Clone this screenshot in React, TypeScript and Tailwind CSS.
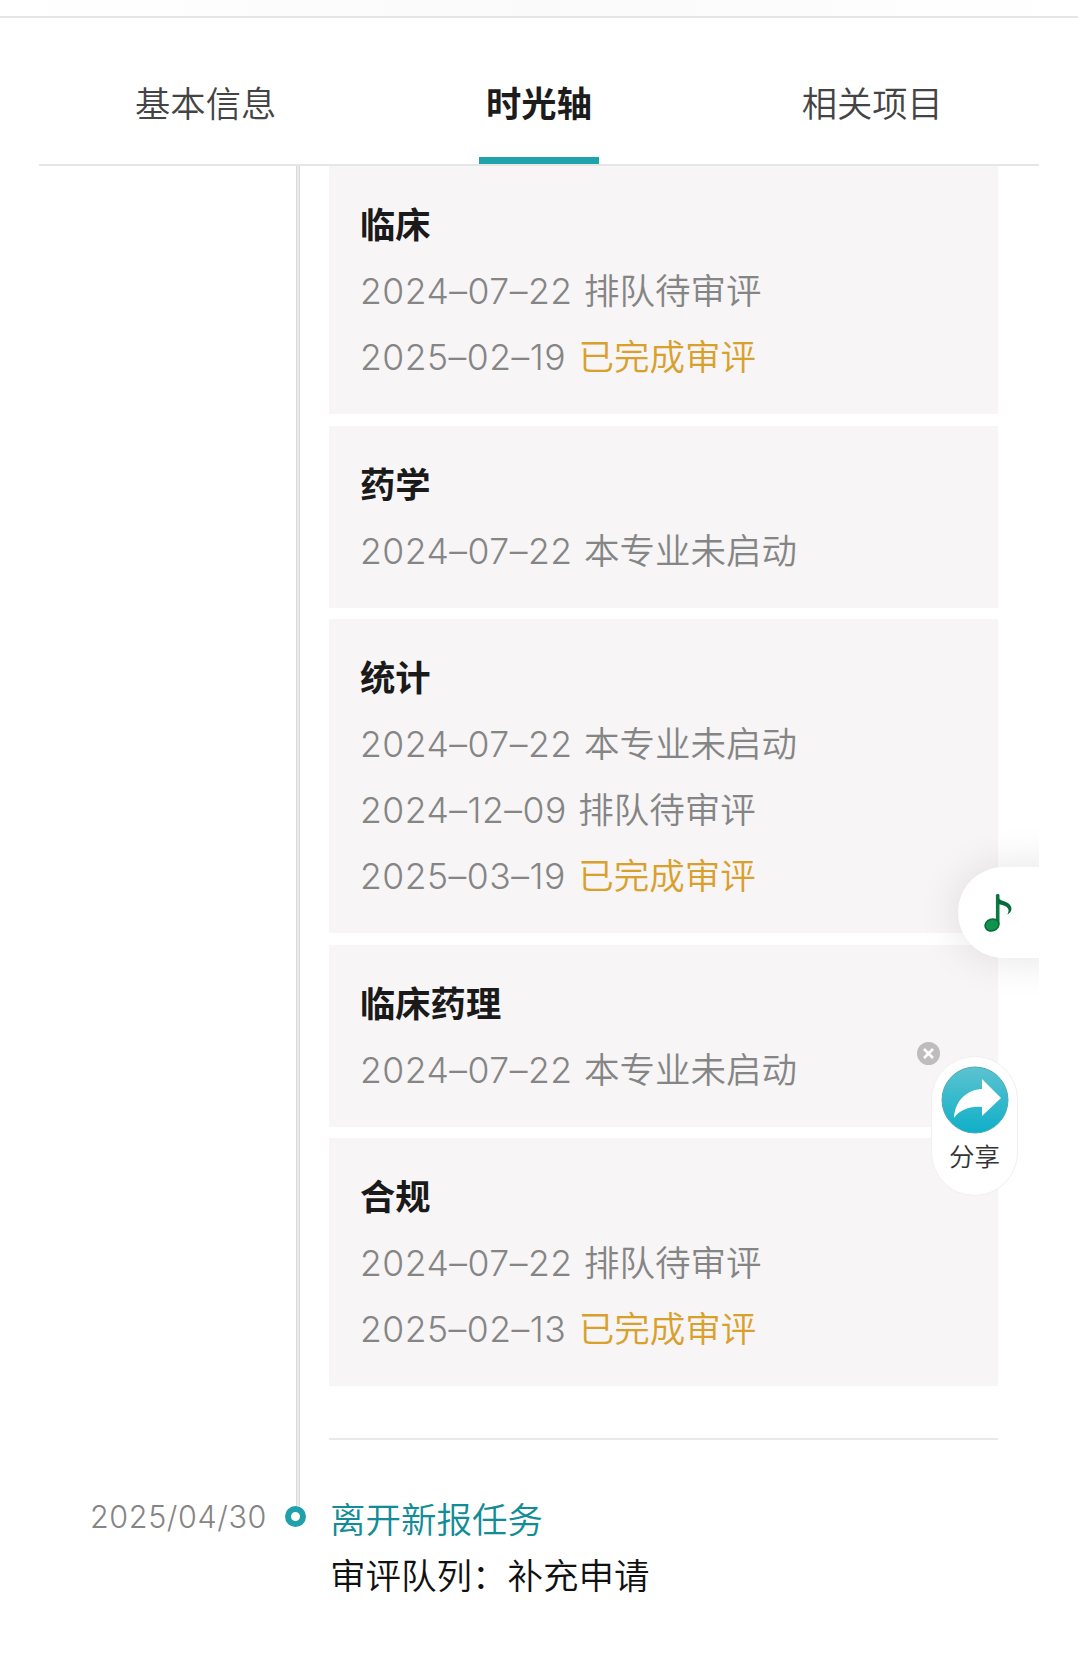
import clsx from 'clsx'

interface Step {
  date: string
  status: string
  done?: boolean
}

interface Section {
  title: string
  steps: Step[]
}

const tabs = ['基本信息', '时光轴', '相关项目']

const sections: Section[] = [
  {
    title: '临床',
    steps: [
      { date: '2024–07–22', status: '排队待审评' },
      { date: '2025–02–19', status: '已完成审评', done: true },
    ],
  },
  {
    title: '药学',
    steps: [{ date: '2024–07–22', status: '本专业未启动' }],
  },
  {
    title: '统计',
    steps: [
      { date: '2024–07–22', status: '本专业未启动' },
      { date: '2024–12–09', status: '排队待审评' },
      { date: '2025–03–19', status: '已完成审评', done: true },
    ],
  },
  {
    title: '临床药理',
    steps: [{ date: '2024–07–22', status: '本专业未启动' }],
  },
  {
    title: '合规',
    steps: [
      { date: '2024–07–22', status: '排队待审评' },
      { date: '2025–02–13', status: '已完成审评', done: true },
    ],
  },
]

function TabBar({ active }: { active: number }) {
  return (
    <nav className="mx-[39px] grid h-[148px] grid-cols-3 border-b-2 border-[#e6e6e6]">
      {tabs.map((tab, i) => (
        <button
          key={tab}
          className={clsx(
            'flex flex-col items-center justify-end text-[35.3px] leading-[52px]',
            i === active ? 'font-bold text-[#1c1c1c]' : 'font-[350] text-[#444]'
          )}
        >
          <span>{tab}</span>
          <span className={clsx('mt-[26px] h-[7px] w-[120px]', i === active && 'bg-[#20a2ad]')} />
        </button>
      ))}
    </nav>
  )
}

function SectionCard({ title, steps }: Section) {
  return (
    <section className="bg-[#f7f5f6] px-[31px] pb-[23px] pt-[27px] text-[35.3px] leading-[66px]">
      <h3 className="font-bold text-[#1a1a1a]">{title}</h3>
      {steps.map(s => (
        <p key={s.date} className="flex gap-[11.5px] whitespace-nowrap text-[35.5px] text-[#858585]">
          <span className="font-light tracking-[0.5px]">{s.date}</span>
          <span className={clsx('font-[350]', s.done && 'pl-px text-[#d9a02c]')}>{s.status}</span>
        </p>
      ))}
    </section>
  )
}

function MusicButton() {
  return (
    <div className="absolute left-[909px] top-[817px] h-[191px] w-[130px] overflow-hidden">
      <button className="ml-[49px] mt-[50px] flex h-[91px] w-[120px] items-center rounded-l-full bg-white pl-[25px] shadow-[0_0_44px_rgba(0,0,0,0.11)]">
        <svg width="32" height="40" viewBox="0 0 32 40" fill="none">
          <path d="M14.700 2.500V31" stroke="#0b7a41" strokeWidth="3.600" strokeLinecap="round" />
          <path d="M14.700 2.500C16 8 21 7.500 25 10c5 3.500 4.500 9-.8 11.500C26.500 18 26 15 22 13c-3-1.500-5-1.500-7.300-2Z" fill="#0b6a3a" />
          <ellipse cx="9" cy="32" rx="7" ry="5.800" transform="rotate(-18 9 32)" fill="#0f9450" stroke="#0a6a39" strokeWidth="1.600" />
        </svg>
      </button>
    </div>
  )
}

function ShareWidget() {
  return (
    <div className="absolute left-[931px] top-[1056px] flex h-[140px] w-[87px] flex-col items-center rounded-full border border-[#f1eff0] bg-white pt-[9px]">
      <svg width="68" height="68" viewBox="0 0 68 68">
        <defs>
          <linearGradient id="share" x1="0" y1="0" x2="0" y2="1">
            <stop offset="0" stopColor="#5cc3cf" />
            <stop offset="1" stopColor="#0fafc9" />
          </linearGradient>
        </defs>
        <circle cx="34" cy="34" r="33" fill="url(#share)" stroke="#4aa9b4" />
        <path d="M41 13 60 32 41 50V41C28 40 19 44 13 52 14 35 25 24 41 23Z" fill="#fff" />
      </svg>
      <span className="mt-[5px] text-[25.5px] font-[350] leading-[36px] text-[#333]">分享</span>
      <button className="absolute -left-[15px] -top-[15px] flex size-[23px] items-center justify-center rounded-full bg-[#bdbdbd]">
        <svg width="11" height="11" viewBox="0 0 11 11" stroke="#fff" strokeWidth="2.600">
          <path d="M1 1l9 9M10 1l-9 9" />
        </svg>
      </button>
    </div>
  )
}

export default function App() {
  return (
    <div className="relative h-[1670px] w-[1078px] overflow-hidden bg-white font-['Inter','Noto_Sans_CJK_SC',sans-serif]">
      <div className="h-[18px] border-b-2 border-[#e6e6e6] bg-gradient-to-r from-white via-[#fafafa] to-white" />
      <TabBar active={1} />

      <main className="flex">
        {/* левая колонка: дата события */}
        <div className="flex w-[267px] flex-col items-end justify-end pb-[70px]">
          <time className="whitespace-nowrap text-[30.5px] font-light leading-[36px] tracking-[0.6px] text-[#858585]">2025/04/30</time>
        </div>

        {/* линия и точка */}
        <div className="ml-[17px] flex w-[22px] flex-col items-center">
          <div className="ml-[5px] h-[1340px] w-[4px] border-x border-[#dadada] bg-[#ebebeb]" />
          <div className="size-[21px] rounded-full border-[6px] border-[#20a0aa] bg-white" />
        </div>

        <div className="ml-[23px] w-[669px]">
          <div className="flex flex-col gap-[11.5px]">
            {sections.map(s => (
              <SectionCard key={s.title} {...s} />
            ))}
          </div>
          <hr className="mt-[52px] border-t-2 border-[#e9e9e9]" />
          <div className="mt-[53px] pl-px text-[35.5px] font-[350] leading-[56px]">
            <p className="text-[#128c96]">离开新报任务</p>
            <p className="text-[#111]">审评队列：补充申请</p>
          </div>
        </div>
      </main>

      <MusicButton />
      <ShareWidget />
    </div>
  )
}
